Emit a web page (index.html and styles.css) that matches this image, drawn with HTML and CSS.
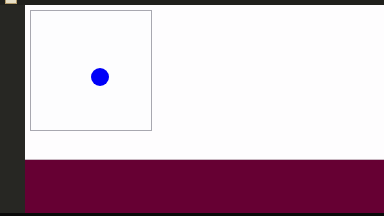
FILE: index.html
```html
<!DOCTYPE html>
<html lang="en">
<head>
  <meta charset="UTF-8">
  <title>Canvas</title>
  <link rel="stylesheet" href="styles.css">
</head>
<body>

  <div class="topbar">
    <span class="tab-icon"></span>
  </div>

  <div class="workspace">
    <div class="sidebar"></div>
    <div class="main">
      <div class="stage">
        <div class="canvas">
          <div class="dot"></div>
        </div>
      </div>
      <div class="panel"></div>
    </div>
  </div>

  <div class="bottombar"></div>

</body>
</html>
```

FILE: styles.css
```css
body {
  margin: 0;
  width: 384px;
  height: 216px;
  overflow: hidden;
  display: flex;
  flex-direction: column;
  background: #262622;
  font-family: 'Liberation Sans', sans-serif;
}

.topbar {
  height: 5px;
  background: #20201c;
  position: relative;
}

.tab-icon {
  position: absolute;
  left: 5px;
  top: -2px;
  width: 10px;
  height: 4px;
  border: 1px solid #b39a6a;
  background: #e8e0c8;
}

.workspace {
  flex: 1;
  display: flex;
}

.sidebar {
  width: 25px;
  background: #272723;
}

.main {
  flex: 1;
  display: flex;
  flex-direction: column;
}

.stage {
  height: 155px;
  background: #fefdfe;
  padding: 5px 0 0 5px;
  box-sizing: border-box;
  border-bottom: 1px solid #c9b8c2;
}

.canvas {
  position: relative;
  width: 120px;
  height: 119px;
  border: 1px solid #a8a8b0;
  background: #fdfdfe;
}

.dot {
  position: absolute;
  left: 60px;
  top: 57px;
  width: 18px;
  height: 18px;
  border-radius: 50%;
  background: #0000f8;
}

.panel {
  flex: 1;
  background: #660033;
}

.bottombar {
  height: 3px;
  background: #0a0a0a;
}
```
